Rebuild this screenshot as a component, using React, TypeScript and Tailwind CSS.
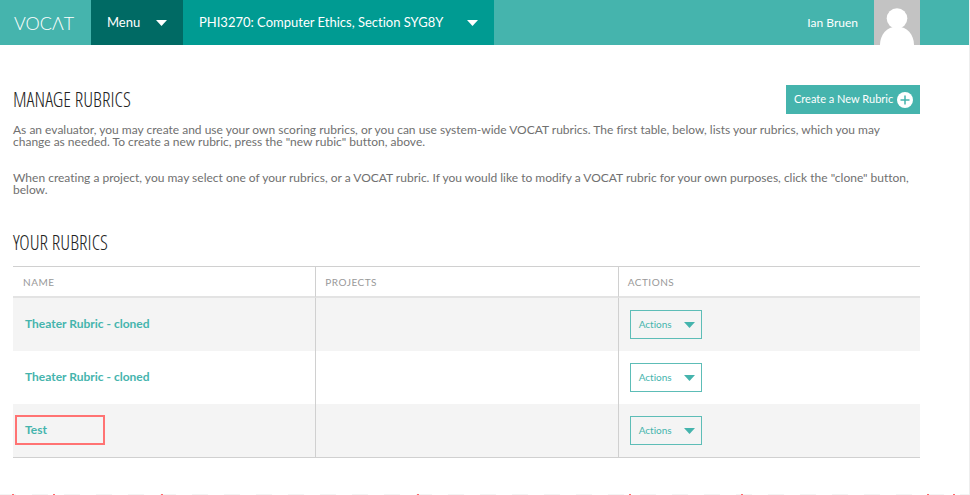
import type { ReactNode } from "react";

const rubrics = [
  { name: "Theater Rubric - cloned", highlighted: false },
  { name: "Theater Rubric - cloned", highlighted: false },
  { name: "Test", highlighted: true },
];

const edgeMarks = [12, 53, 161, 417, 629, 741, 927, 953];

function Caret() {
  return (
    <svg viewBox="0 0 11 6" className="h-[6px] w-[11px] shrink-0" fill="currentColor" aria-hidden="true">
      <path d="M0 0h11L5.5 6z" />
    </svg>
  );
}

function Avatar() {
  return (
    <svg viewBox="0 0 46 45" className="h-[45px] w-[46px] shrink-0" role="img" aria-label="Profile picture">
      <path fill="#c3c3c3" d="M0 0h46v45H0z" />
      <circle cx="23" cy="18.500" r="10.300" fill="#fff" />
      <path fill="#fff" d="M6 45c0-10 6.500-18.500 17-18.500S40 35 40 45z" />
    </svg>
  );
}

function PlusBadge() {
  return (
    <svg viewBox="0 0 16 16" className="size-4 shrink-0" aria-hidden="true">
      <circle cx="8" cy="8" r="8" fill="#fff" />
      <path d="M8 3.500v9M3.500 8h9" stroke="#45b4ad" strokeWidth="1.500" />
    </svg>
  );
}

function SectionTitle({ children }: { children: ReactNode }) {
  return (
    <h2 className="font-['Open_Sans_Condensed_Light','Roboto_Condensed',sans-serif] text-[20px] leading-6 font-light text-[#222]">
      {children}
    </h2>
  );
}

function ColumnHeading({ children }: { children: ReactNode }) {
  return (
    <th scope="col" className="h-[31px] w-1/3 border-b-2 border-l border-b-[#e3e3e3] border-l-[#d0d0d0] px-[9px] text-left text-[10px] leading-4 font-normal tracking-wider text-[#999] first:border-l-0 first:pl-[10px]">
      {children}
    </th>
  );
}

export default function App() {
  return (
    <div className="border-r border-[#eee] bg-white font-[Lato,'Liberation_Sans',sans-serif] text-[12px] text-[#707070] [font-variant-ligatures:none]">
      <header className="flex h-[45px] items-stretch bg-[#45b4ad] pr-[49px] text-[13px] text-white">
        <a href="#home" className="flex w-[91px] items-center pl-[14px] text-[18px] leading-6 font-light">
          VOCΛT
        </a>
        <button type="button" className="flex w-[92px] items-center justify-between bg-[#006a64] px-4">
          Menu
          <Caret />
        </button>
        <button type="button" className="flex w-[311px] items-center justify-between bg-[#009b92] px-4">
          PHI3270: Computer Ethics, Section SYG8Y
          <Caret />
        </button>
        <a href="#profile" className="ml-auto flex items-center gap-4 text-[12px]">
          Ian Bruen
          <Avatar />
        </a>
      </header>

      <main className="pt-10 pr-[49px] pl-[13px]">
        <div className="flex items-center justify-between">
          <SectionTitle>MANAGE RUBRICS</SectionTitle>
          <button type="button" className="flex h-[29px] w-[134px] items-center justify-between bg-[#45b4ad] pr-[7px] pl-2 text-[11px] text-white">
            Create a New Rubric
            <PlusBadge />
          </button>
        </div>

        <p className="mt-[10px] leading-3">
          As an evaluator, you may create and use your own scoring rubrics, or you can use system-wide VOCAT rubrics. The first table, below, lists your rubrics, which you may change as needed. To create a new rubric, press the "new rubic" button, above.
        </p>
        <p className="mt-6 leading-3">
          When creating a project, you may select one of your rubrics, or a VOCAT rubric. If you would like to modify a VOCAT rubric for your own purposes, click the "clone" button, below.
        </p>

        <div className="mt-[35px]">
          <SectionTitle>YOUR RUBRICS</SectionTitle>
        </div>

        <table className="mt-[11px] w-full table-fixed border-separate border-spacing-0 border-y border-[#d0d0d0]">
          <thead>
            <tr>
              <ColumnHeading>NAME</ColumnHeading>
              <ColumnHeading>PROJECTS</ColumnHeading>
              <ColumnHeading>ACTIONS</ColumnHeading>
            </tr>
          </thead>
          <tbody>
            {rubrics.map((rubric, index) => (
              <tr key={index} className="odd:bg-[#f4f4f4]">
                <td className="h-[53px] px-[2px] pb-[2px]">
                  <a
                    href="#rubric"
                    className={
                      rubric.highlighted
                        ? "flex h-[30px] w-[90px] items-center border-2 border-[#ff7373] px-2 font-bold text-[#45b4ad]"
                        : "flex items-center px-[10px] font-bold text-[#45b4ad]"
                    }
                  >
                    {rubric.name}
                  </a>
                </td>
                <td className="border-l border-[#d0d0d0]" />
                <td className="border-l border-[#d0d0d0] px-[11px]">
                  <button type="button" className="flex h-[29px] w-[72px] items-center justify-between border border-[#5dbdb7] pr-[6px] pl-2 text-[10px] text-[#45b4ad]">
                    Actions
                    <Caret />
                  </button>
                </td>
              </tr>
            ))}
          </tbody>
        </table>
      </main>

      <svg className="mt-9 block h-px w-full" aria-hidden="true">
        <path d="M0 .5H970" stroke="#f4f4f4" strokeDasharray="16 16" />
        {edgeMarks.map((x) => (
          <path key={x} d={`M${x} 0h2v1h-2z`} fill="#ff6a6a" />
        ))}
      </svg>
    </div>
  );
}
